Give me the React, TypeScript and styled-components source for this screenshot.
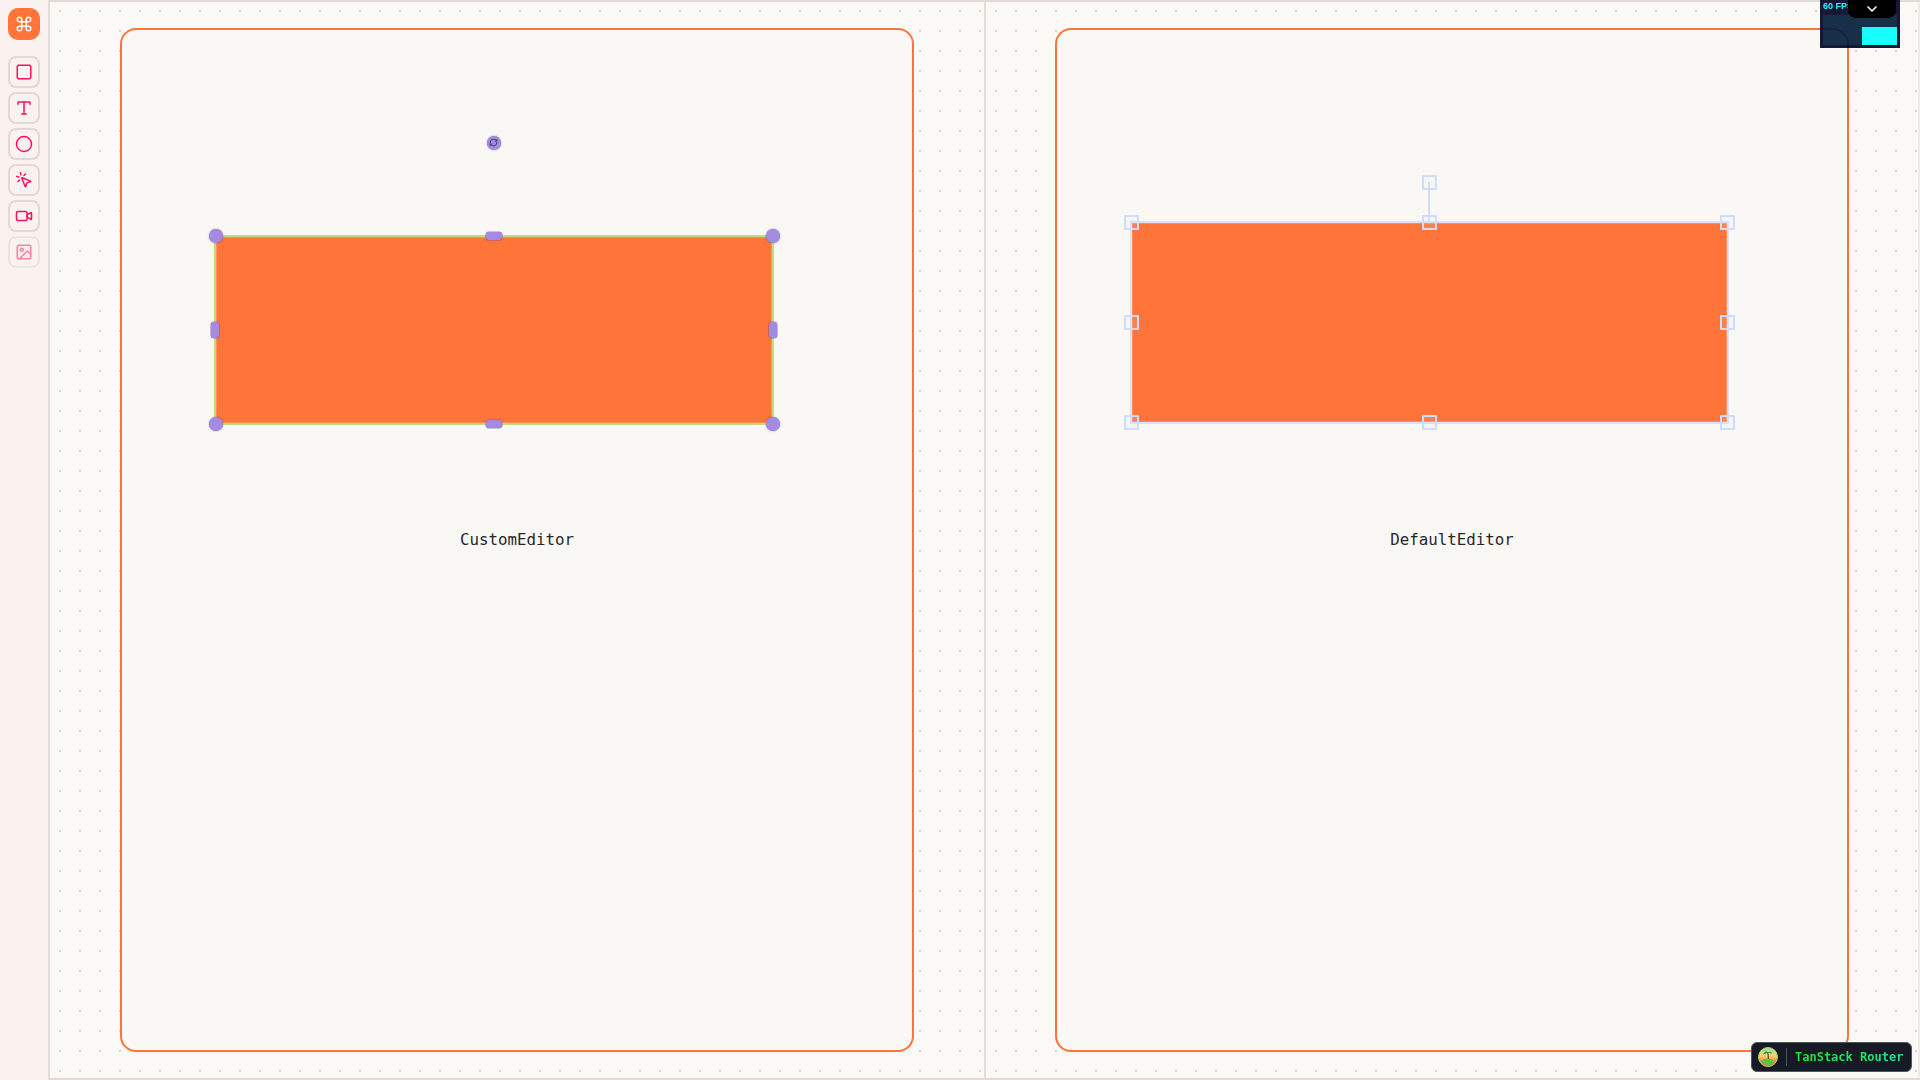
import React from "react";
import styled, { createGlobalStyle } from "styled-components";
import { Command, Square, Type, Circle, MousePointerClick, Video, Image, RefreshCw, ChevronDown } from "lucide-react";

const Global = createGlobalStyle`
  html, body { margin: 0; padding: 0; height: 100%; overflow: hidden; background: #fbf9f6; }
  #root { height: 100%; }
  * { box-sizing: border-box; }
`;

const Shell = styled.div`
  display: flex;
  width: 1920px;
  height: 1080px;
  position: relative;
  overflow: hidden;
`;

const Sidebar = styled.aside`
  width: 48px;
  flex: none;
  display: flex;
  flex-direction: column;
  align-items: center;
  padding-top: 8px;
  background: #faf2ee;
`;

const LogoButton = styled.div`
  width: 32px;
  height: 32px;
  margin-bottom: 16px;
  border-radius: 10px;
  background: #ff7438;
  color: #fff;
  display: flex;
  align-items: center;
  justify-content: center;
`;

const ToolList = styled.div`
  display: flex;
  flex-direction: column;
  gap: 4px;
`;

const ToolButton = styled.button<{ $disabled?: boolean }>`
  width: 32px;
  height: 32px;
  padding: 0;
  border-radius: 8px;
  border: 2px solid #e2d8d5;
  background: transparent;
  color: #ff0f5f;
  display: flex;
  align-items: center;
  justify-content: center;
  opacity: ${(p) => (p.$disabled ? 0.5 : 1)};
`;

const Panes = styled.main`
  flex: 1;
  display: grid;
  grid-template-columns: 1fr 1fr;
  border-top: 2px solid #e4dbd6;
  border-bottom: 2px solid #e4dbd6;
`;

const Pane = styled.section`
  border-left: 2px solid #e4dbd6;
  padding: 26px 70px;
  background-color: #fbf9f6;
  background-image: radial-gradient(circle at center, #d6d4d0 1px, transparent 1.1px);
  background-size: 20px 20px;
  background-position: 0 -1px;

  &:last-child {
    border-right: 2px solid #f1ebe7;
    padding: 26px 69px;
  }
`;

const Frame = styled.div`
  height: 100%;
  border: 2px solid #ff7438;
  border-radius: 16px;
  background: #f9f8f4;
  display: flex;
  flex-direction: column;
  align-items: center;
`;

const Stage = styled.div`
  position: relative;
  width: 100%;
  height: 500px;
  flex: none;
  filter: blur(0.4px);
`;

const Label = styled.div`
  font-family: "DejaVu Sans Mono", "Liberation Mono", monospace;
  font-size: 15.8px;
  line-height: 20px;
  color: #27272a;
`;

const Rect = styled.div<{ $x: number; $y: number; $w: number; $h: number; $stroke: string; $inner: string }>`
  position: absolute;
  left: ${(p) => p.$x}px;
  top: ${(p) => p.$y}px;
  width: ${(p) => p.$w}px;
  height: ${(p) => p.$h}px;
  background: #ff7438;
  border: 2.5px solid ${(p) => p.$stroke};
  box-shadow: inset 0 0 0 0.6px ${(p) => p.$inner};
`;

const Dot = styled.div<{ $x: number; $y: number }>`
  position: absolute;
  left: ${(p) => p.$x - 7}px;
  top: ${(p) => p.$y - 7}px;
  width: 14px;
  height: 14px;
  border-radius: 50%;
  background: #a48ae0;
  box-shadow: 0 0 1.5px rgba(60, 40, 120, 0.7);
  color: #3f3a66;
  display: flex;
  align-items: center;
  justify-content: center;
`;

const Pill = styled.div<{ $x: number; $y: number; $w: number; $h: number }>`
  position: absolute;
  left: ${(p) => p.$x - p.$w / 2}px;
  top: ${(p) => p.$y - p.$h / 2}px;
  width: ${(p) => p.$w}px;
  height: ${(p) => p.$h}px;
  border-radius: 3px;
  background: #a48ae0;
  box-shadow: 0 0 0 0.6px rgba(90, 70, 170, 0.6);
`;

const Grip = styled.div<{ $x: number; $y: number }>`
  position: absolute;
  left: ${(p) => p.$x - 7.5}px;
  top: ${(p) => p.$y - 7.5}px;
  width: 15px;
  height: 15px;
  border: 2.5px solid #cfdcfb;
  border-radius: 1px;
  background: rgba(226, 234, 255, 0.12);
`;

const Stem = styled.div<{ $x: number; $y: number; $h: number }>`
  position: absolute;
  left: ${(p) => p.$x - 1}px;
  top: ${(p) => p.$y}px;
  width: 2px;
  height: ${(p) => p.$h}px;
  background: #cfdcfb;
`;

const Stats = styled.div`
  position: absolute;
  right: 20px;
  top: 0;
  width: 80px;
  height: 48px;
  background: #002;
  opacity: 0.9;
  padding: 15px 3px 3px;
  display: flex;
  align-items: flex-end;
  justify-content: flex-end;
`;

const StatsText = styled.span`
  position: absolute;
  left: 3px;
  top: 0;
  font: bold 9px/12px "Liberation Sans", sans-serif;
  color: #0ff;
`;

const StatsGraph = styled.div`
  width: 100%;
  height: 100%;
  background: rgba(0, 255, 255, 0.1);
  display: flex;
  align-items: flex-end;
  justify-content: flex-end;
`;

const StatsBar = styled.div`
  width: 35px;
  height: 18px;
  background: #0ff;
`;

const StatsToggle = styled.div`
  position: absolute;
  left: 1848px;
  top: 0;
  width: 48px;
  height: 18px;
  background: #000;
  border-radius: 0 0 8px 8px;
  color: #fff;
  display: flex;
  align-items: center;
  justify-content: center;
`;

const RouterBadge = styled.div`
  position: absolute;
  left: 1751px;
  top: 1042px;
  width: 161px;
  height: 30px;
  display: flex;
  align-items: center;
  padding-left: 6px;
  background: #151a24;
  border: 1px solid #4b5563;
  border-radius: 6px;
`;

const BadgeDivider = styled.span`
  width: 1px;
  height: 18px;
  margin: 0 8px;
  background: #4b5563;
`;

const BadgeText = styled.span`
  font: bold 12px/16px "DejaVu Sans Mono", "Liberation Mono", monospace;
  background: linear-gradient(to right, #1fe62f, #14e98c);
  -webkit-background-clip: text;
  background-clip: text;
  color: transparent;
`;

const PalmLogo = () => (
  <svg width="20" height="20" viewBox="0 0 20 20" aria-hidden="true">
    <defs>
      <linearGradient id="sky" x1="0" y1="0" x2="0" y2="1">
        <stop offset="0" stopColor="#9fd8b8" />
        <stop offset="0.45" stopColor="#fbd26a" />
        <stop offset="0.8" stopColor="#f4686a" />
      </linearGradient>
    </defs>
    <circle cx="10" cy="10" r="9.500" fill="url(#sky)" stroke="#a8dc4a" strokeWidth="1" />
    <path d="M3 14.500c3-4 10-4 14 0-2 4.500-11 4.500-14 0z" fill="#5fc63a" />
    <path d="M10.500 12c0-2.500 0-4.500-1-6.800" stroke="#7a4a20" strokeWidth="1.200" fill="none" />
    <path d="M9.500 5.500c-2-1-4 0-4.500 2.200 1.500-.9 3-1.200 4.500-2.200zm0 0c2-1.500 4-.8 5 1.200-1.700-.7-3.300-.9-5-1.200zm0 0c-1-1.300-2-2.200-3.500-2 1 .6 2.300 1.100 3.500 2z" fill="#1f9a3a" />
  </svg>
);

const Custom = () => (
  <Stage>
    <Rect $x={92} $y={205} $w={560} $h={190} $stroke="#c2dc82" $inner="#ffa27c" />
    <Dot $x={371.7} $y={112.7}><RefreshCw size={9} strokeWidth={2.5} /></Dot>
    {[
      [93.6, 206.3], [651, 206.3], [93.6, 393.7], [651, 393.7],
    ].map(([x, y]) => <Dot key={`${x}-${y}`} $x={x} $y={y} />)}
    <Pill $x={371.7} $y={206.3} $w={16} $h={8} />
    <Pill $x={371.7} $y={393.5} $w={16} $h={8} />
    <Pill $x={93.3} $y={300} $w={8} $h={16} />
    <Pill $x={651} $y={300} $w={8} $h={16} />
  </Stage>
);

const Default = () => {
  const xs = [74, 372, 670];
  const ys = [192.3, 292.5, 392.5];
  const grips: [number, number][] = [];
  ys.forEach((y, j) => xs.forEach((x, i) => { if (i !== 1 || j !== 1) grips.push([x, y]); }));
  return (
    <Stage>
      <Rect $x={73} $y={191} $w={598.500} $h={203} $stroke="#d8e1f9" $inner="#ffa27c" />
      <Stem $x={372} $y={152} $h={40} />
      <Grip $x={372} $y={152} />
      {grips.map(([x, y]) => <Grip key={`${x}-${y}`} $x={x} $y={y} />)}
    </Stage>
  );
};

export default function App() {
  return (
    <Shell>
      <Global />
      <Sidebar>
        <LogoButton><Command size={18} strokeWidth={2} /></LogoButton>
        <ToolList>
          <ToolButton><Square size={18} /></ToolButton>
          <ToolButton><Type size={18} /></ToolButton>
          <ToolButton><Circle size={18} /></ToolButton>
          <ToolButton><MousePointerClick size={18} /></ToolButton>
          <ToolButton><Video size={18} /></ToolButton>
          <ToolButton $disabled><Image size={18} /></ToolButton>
        </ToolList>
      </Sidebar>
      <Panes>
        <Pane>
          <Frame>
            <Custom />
            <Label>CustomEditor</Label>
          </Frame>
        </Pane>
        <Pane>
          <Frame>
            <Default />
            <Label>DefaultEditor</Label>
          </Frame>
        </Pane>
      </Panes>
      <Stats>
        <StatsText>60 FPS</StatsText>
        <StatsGraph><StatsBar /></StatsGraph>
      </Stats>
      <StatsToggle><ChevronDown size={16} strokeWidth={2.5} /></StatsToggle>
      <RouterBadge>
        <PalmLogo />
        <BadgeDivider />
        <BadgeText>TanStack Router</BadgeText>
      </RouterBadge>
    </Shell>
  );
}
